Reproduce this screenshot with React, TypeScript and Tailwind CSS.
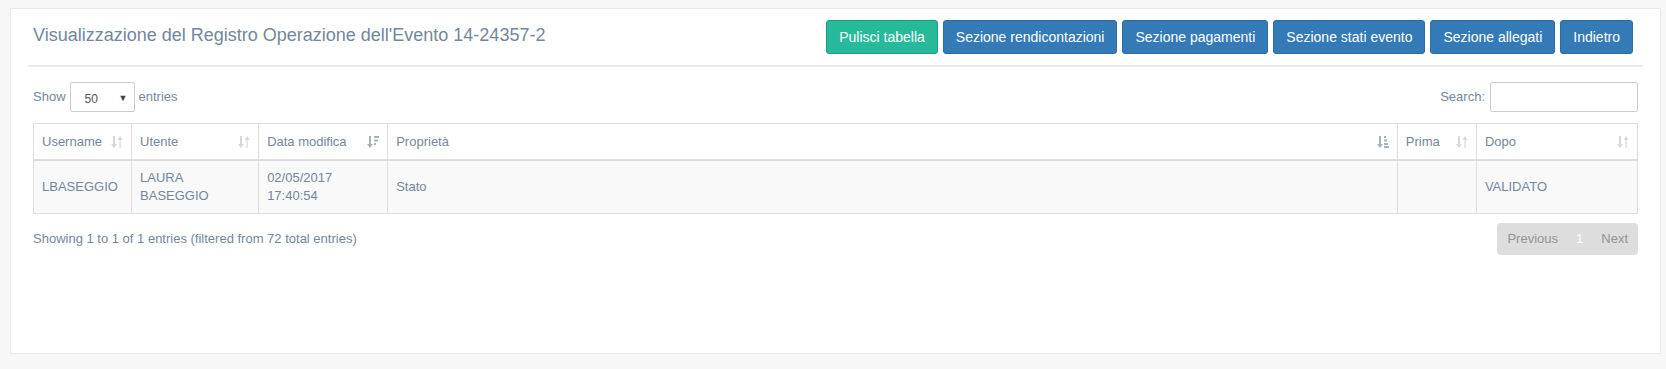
import React from "react";

function SortIcon({ kind }: { kind: "both" | "asc" | "desc" }) {
  const color = kind === "both" ? "#d3d9df" : "#a7b2bd";
  return (
    <svg width="12" height="14" viewBox="0 0 12 14" className="absolute right-[8px] top-1/2 -translate-y-1/2">
      <g fill={color}>
        <rect x="2" y="1" width="2" height="9" />
        <polygon points="0,9 6,9 3,13" />
        {kind === "both" && (
          <>
            <rect x="8.5" y="4" width="1.2" height="9" />
            <polygon points="6.6,5 11.6,5 9.1,1" />
          </>
        )}
        {kind === "desc" && (
          <>
            <rect x="7" y="1" width="5" height="2" />
            <rect x="7" y="4.5" width="4" height="2" />
            <rect x="7" y="8" width="2" height="2" />
          </>
        )}
        {kind === "asc" && (
          <>
            <rect x="7" y="1" width="2" height="2" />
            <rect x="7" y="4.5" width="3" height="2" />
            <rect x="7" y="8" width="4" height="2" />
            <rect x="7" y="11" width="5" height="2" />
          </>
        )}
      </g>
    </svg>
  );
}

export default function App() {
  const buttons = [
    { label: "Pulisci tabella", green: true },
    { label: "Sezione rendicontazioni" },
    { label: "Sezione pagamenti" },
    { label: "Sezione stati evento" },
    { label: "Sezione allegati" },
    { label: "Indietro" },
  ];

  const columns: { title: string; width: number; sort: "both" | "asc" | "desc" }[] = [
    { title: "Username", width: 98, sort: "both" },
    { title: "Utente", width: 127, sort: "both" },
    { title: "Data modifica", width: 129, sort: "desc" },
    { title: "Proprietà", width: 1009, sort: "asc" },
    { title: "Prima", width: 79, sort: "both" },
    { title: "Dopo", width: 161, sort: "both" },
  ];

  return (
    <div
      className="min-h-screen bg-[#F7F7F7] pt-[8px] pl-[10px] pr-[5px] text-[13px] text-[#73879C]"
      style={{ fontFamily: '"Liberation Sans", Arial, sans-serif' }}
    >
      <div className="h-[346px] border border-[#E6E9ED] bg-white px-[17px] pt-[10px]">
        {/* header */}
        <div className="flex items-start justify-between border-b-2 border-[#E6E9ED] px-[5px] pt-[1px] pb-[6px] mb-[10px]">
          <h2 className="mt-[5px] text-[18px] leading-[20px] font-normal">
            Visualizzazione del Registro Operazione dell'Evento 14-24357-2
          </h2>
          <div className="flex gap-[5px] mb-[5px] pr-[5px]">
            {buttons.map((b, i) => (
              <button
                key={i}
                className={
                  b.green
                    ? "h-[34px] px-[12px] text-[14px] leading-[20px] text-white rounded-[3px] border border-[#169F85] bg-[#26B99A]"
                    : "h-[34px] px-[12px] text-[14px] leading-[20px] text-white rounded-[3px] border border-[#2e6da4] bg-[#337ab7]"
                }
              >
                {b.label}
              </button>
            ))}
          </div>
        </div>

        {/* content */}
        <div className="px-[5px] pt-[5px]">
          <div className="flex items-center justify-between h-[30px]">
            <div className="flex items-center gap-[4px]">
              <span>Show</span>
              <div className="flex h-[30px] w-[65px] items-center justify-between border border-[#ccc] rounded-[2px] pl-[14px] pr-[6px] pt-[3px] text-[12px] text-[#555]">
                <span>50</span>
                <span className="text-[9px] text-[#444]">▼</span>
              </div>
              <span>entries</span>
            </div>
            <div className="flex items-center gap-[5px]">
              <span>Search:</span>
              <div className="h-[30px] w-[148px] border border-[#ccc] rounded-[2px]" />
            </div>
          </div>

          <table className="mt-[11px] w-full table-fixed border-collapse">
            <colgroup>
              {columns.map((c, i) => (
                <col key={i} style={{ width: c.width }} />
              ))}
            </colgroup>
            <thead>
              <tr>
                {columns.map((c, i) => (
                  <th
                    key={i}
                    className="relative border border-b-2 border-[#ddd] p-[8px] pr-[28px] text-left font-normal leading-[19px] bg-white"
                  >
                    {c.title}
                    <SortIcon kind={c.sort} />
                  </th>
                ))}
              </tr>
            </thead>
            <tbody>
              <tr className="bg-[#f9f9f9]">
                <td className="border border-[#ddd] p-[8px] leading-[18px] align-middle">LBASEGGIO</td>
                <td className="border border-[#ddd] p-[8px] leading-[18px] align-middle">
                  LAURA
                  <br />
                  BASEGGIO
                </td>
                <td className="border border-[#ddd] p-[8px] leading-[18px] align-middle">
                  02/05/2017
                  <br />
                  17:40:54
                </td>
                <td className="border border-[#ddd] p-[8px] leading-[18px] align-middle">Stato</td>
                <td className="border border-[#ddd] p-[8px] leading-[18px] align-middle"></td>
                <td className="border border-[#ddd] p-[8px] leading-[18px] align-middle">VALIDATO</td>
              </tr>
            </tbody>
          </table>

          <div className="mt-[9px] flex items-center justify-between">
            <span>Showing 1 to 1 of 1 entries (filtered from 72 total entries)</span>
            <div className="flex h-[32px] items-center rounded-[4px] bg-[#ddd] px-[1px] text-[#949494]">
              <span className="px-[9px]">Previous</span>
              <span className="px-[9px] text-white">1</span>
              <span className="px-[9px]">Next</span>
            </div>
          </div>
        </div>
      </div>
    </div>
  );
}
